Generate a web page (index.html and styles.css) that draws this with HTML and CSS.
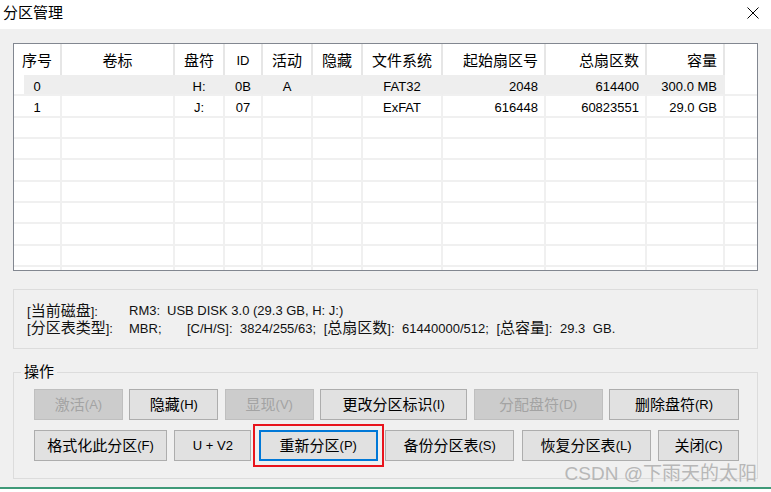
FILE: index.html
```html
<!DOCTYPE html>
<html lang="zh-CN">
<head>
<meta charset="utf-8">
<title>分区管理</title>
<link rel="stylesheet" href="styles.css">
</head>
<body>
<div class="window">
  <header class="titlebar">
    <span class="title zh">分区管理</span>
    <svg class="close" width="12" height="12" viewBox="0 0 12 12"><path d="M0.5 0.5L11.5 11.5M11.5 0.5L0.5 11.5" stroke="#000" stroke-width="1" fill="none"/></svg>
  </header>
  <main class="client">
    <div class="listview">
      <div class="lv-row lv-head">
        <div class="c zh">序号</div><div class="c zh">卷标</div><div class="c zh">盘符</div><div class="c">ID</div><div class="c zh">活动</div><div class="c zh">隐藏</div><div class="c zh">文件系统</div><div class="c r zh">起始扇区号</div><div class="c r zh">总扇区数</div><div class="c r zh">容量</div><div class="c fill"></div>
      </div>
      <div class="lv-row sel">
        <div class="c">0</div><div class="c"></div><div class="c">H:</div><div class="c">0B</div><div class="c">A</div><div class="c"></div><div class="c">FAT32</div><div class="c r">2048</div><div class="c r">614400</div><div class="c r">300.0 MB</div><div class="c fill"></div>
      </div>
      <div class="lv-row">
        <div class="c">1</div><div class="c"></div><div class="c">J:</div><div class="c">07</div><div class="c"></div><div class="c"></div><div class="c">ExFAT</div><div class="c r">616448</div><div class="c r">60823551</div><div class="c r">29.0 GB</div><div class="c fill"></div>
      </div>
      <div class="lv-row"><div class="c"></div><div class="c"></div><div class="c"></div><div class="c"></div><div class="c"></div><div class="c"></div><div class="c"></div><div class="c"></div><div class="c"></div><div class="c"></div><div class="c fill"></div></div>
      <div class="lv-row"><div class="c"></div><div class="c"></div><div class="c"></div><div class="c"></div><div class="c"></div><div class="c"></div><div class="c"></div><div class="c"></div><div class="c"></div><div class="c"></div><div class="c fill"></div></div>
      <div class="lv-row"><div class="c"></div><div class="c"></div><div class="c"></div><div class="c"></div><div class="c"></div><div class="c"></div><div class="c"></div><div class="c"></div><div class="c"></div><div class="c"></div><div class="c fill"></div></div>
      <div class="lv-row"><div class="c"></div><div class="c"></div><div class="c"></div><div class="c"></div><div class="c"></div><div class="c"></div><div class="c"></div><div class="c"></div><div class="c"></div><div class="c"></div><div class="c fill"></div></div>
      <div class="lv-row"><div class="c"></div><div class="c"></div><div class="c"></div><div class="c"></div><div class="c"></div><div class="c"></div><div class="c"></div><div class="c"></div><div class="c"></div><div class="c"></div><div class="c fill"></div></div>
      <div class="lv-row"><div class="c"></div><div class="c"></div><div class="c"></div><div class="c"></div><div class="c"></div><div class="c"></div><div class="c"></div><div class="c"></div><div class="c"></div><div class="c"></div><div class="c fill"></div></div>
      <div class="lv-row"><div class="c"></div><div class="c"></div><div class="c"></div><div class="c"></div><div class="c"></div><div class="c"></div><div class="c"></div><div class="c"></div><div class="c"></div><div class="c"></div><div class="c fill"></div></div>
      <div class="lv-row"><div class="c"></div><div class="c"></div><div class="c"></div><div class="c"></div><div class="c"></div><div class="c"></div><div class="c"></div><div class="c"></div><div class="c"></div><div class="c"></div><div class="c fill"></div></div>
    </div>

    <div class="info">
      <div class="info-row">
        <span>[<span class="zh">当前磁盘</span>]:</span>
        <span><span class="k1">RM3:</span>USB DISK 3.0 (29.3 GB, H: J:)</span>
      </div>
      <div class="info-row">
        <span>[<span class="zh">分区表类型</span>]:</span>
        <span class="wide"><span class="k2">MBR;</span>[C/H/S]: 3824/255/63; [<span class="zh">总扇区数</span>]: 61440000/512; [<span class="zh">总容量</span>]: 29.3 GB.</span>
      </div>
    </div>

    <fieldset class="ops">
      <legend class="zh">操作</legend>
      <div class="btn-row">
        <button class="btn w89" disabled><span class="zh">激活</span>(A)</button>
        <button class="btn w89"><span class="zh">隐藏</span>(H)</button>
        <button class="btn w89" disabled><span class="zh">显现</span>(V)</button>
        <button class="btn w147"><span class="zh">更改分区标识</span>(I)</button>
        <button class="btn w129" disabled><span class="zh">分配盘符</span>(D)</button>
        <button class="btn w130"><span class="zh">删除盘符</span>(R)</button>
      </div>
      <div class="btn-row">
        <button class="btn w133"><span class="zh">格式化此分区</span>(F)</button>
        <button class="btn w77">U + V2</button>
        <button class="btn w119 focus"><span class="zh">重新分区</span>(P)</button>
        <button class="btn w129"><span class="zh">备份分区表</span>(S)</button>
        <button class="btn w129"><span class="zh">恢复分区表</span>(L)</button>
        <button class="btn w81"><span class="zh">关闭</span>(C)</button>
      </div>
    </fieldset>
  </main>
  <div class="edge"></div>
  <div class="watermark">CSDN @下雨天的太阳</div>
</div>
</body>
</html>
```

FILE: styles.css
```css
* {
  box-sizing: border-box;
}

html,
body {
  margin: 0;
}

body {
  width: 771px;
  height: 492px;
  overflow: hidden;
  background: #ffffff;
  font-family: "Liberation Sans", "Noto Sans CJK SC", sans-serif;
  font-size: 13px;
  color: #000000;
}

.zh {
  font-size: 15px;
}

.window {
  position: relative;
  height: 492px;
  display: flex;
  flex-direction: column;
}

/* title bar */
.titlebar {
  flex: none;
  height: 29px;
  background: #ffffff;
  display: flex;
  align-items: center;
  justify-content: space-between;
  padding: 0 12px 3px 3px;
}

.title {
  line-height: 20px;
}

.close {
  display: block;
}

/* client area */
.client {
  flex: none;
  height: 458px;
  background: #f0f0f0;
  padding: 14px 13px 0;
  display: flex;
  flex-direction: column;
}

/* list view */
.listview {
  flex: none;
  height: 228px;
  border: 1px solid #828790;
  background: #ffffff;
  overflow: hidden;
}

.lv-row {
  display: grid;
  grid-template-columns: 48px 113px 50px 38px 50px 50px 80px 103px 101px 78px 1fr;
  height: 21.333px;
}

.lv-head {
  height: 31px;
}

.c {
  display: flex;
  align-items: center;
  justify-content: center;
  border-right: 2px solid #f0f0f0;
  border-bottom: 2px solid #f0f0f0;
  padding-top: 4px;
  line-height: 15px;
  white-space: nowrap;
  overflow: hidden;
}

.lv-head .c {
  border-bottom: none;
  border-right-color: #e6e6e6;
  padding-top: 2px;
  line-height: 18px;
}

.c.r {
  justify-content: flex-end;
  padding-right: 6px;
}

.c.fill {
  border-right: none;
}

.sel .c {
  background: #eeeeee;
  border-right-color: #eeeeee;
}

.sel .c:first-child {
  background: linear-gradient(to right, #ffffff 10px, #eeeeee 10px);
}

.sel .c.fill {
  background: none;
}

/* disk info */
.info {
  flex: none;
  margin-top: 18px;
  height: 60px;
  border: 1px solid #dcdcdc;
  padding-left: 13px;
  display: flex;
  flex-direction: column;
  justify-content: center;
  color: #111111;
}

.info-row {
  display: grid;
  grid-template-columns: 102px auto;
  height: 17.5px;
  line-height: 17.5px;
  white-space: nowrap;
}

.wide {
  word-spacing: 4px;
}

.k1 {
  display: inline-block;
  width: 38px;
}

.k2 {
  display: inline-block;
  width: 58px;
}

/* operations group */
.ops {
  flex: none;
  margin: 14px 0 0;
  padding: 8px 18px 17px 20px;
  border: 1px solid #dcdcdc;
  min-width: 0;
}

.ops legend {
  margin-left: -13px;
  padding: 0 3px;
  line-height: 18px;
}

.btn-row {
  display: flex;
  justify-content: space-between;
}

.btn-row + .btn-row {
  margin-top: 10px;
}

.btn {
  height: 31px;
  padding: 0;
  border: 1px solid #adadad;
  background: #e1e1e1;
  font: inherit;
  color: #000000;
  line-height: 18px;
  display: flex;
  align-items: center;
  justify-content: center;
  white-space: nowrap;
}

.btn:disabled {
  background: #cccccc;
  border-color: #bfbfbf;
  color: #a3a3a3;
}

.btn.focus {
  border: 2px solid #0078d7;
  outline: 2px solid #e8141c;
  outline-offset: 4px;
}

.w77 { width: 77px; }
.w81 { width: 81px; }
.w89 { width: 89px; }
.w119 { width: 119px; }
.w129 { width: 129px; }
.w130 { width: 130px; }
.w133 { width: 133px; }
.w147 { width: 147px; }

/* bottom edge */
.edge {
  flex: none;
  height: 2px;
  background: #3f9a78;
}

.watermark {
  position: absolute;
  right: 14px;
  top: 462px;
  font-size: 19px;
  line-height: 24px;
  color: #b7b7b7;
  white-space: nowrap;
}
```
